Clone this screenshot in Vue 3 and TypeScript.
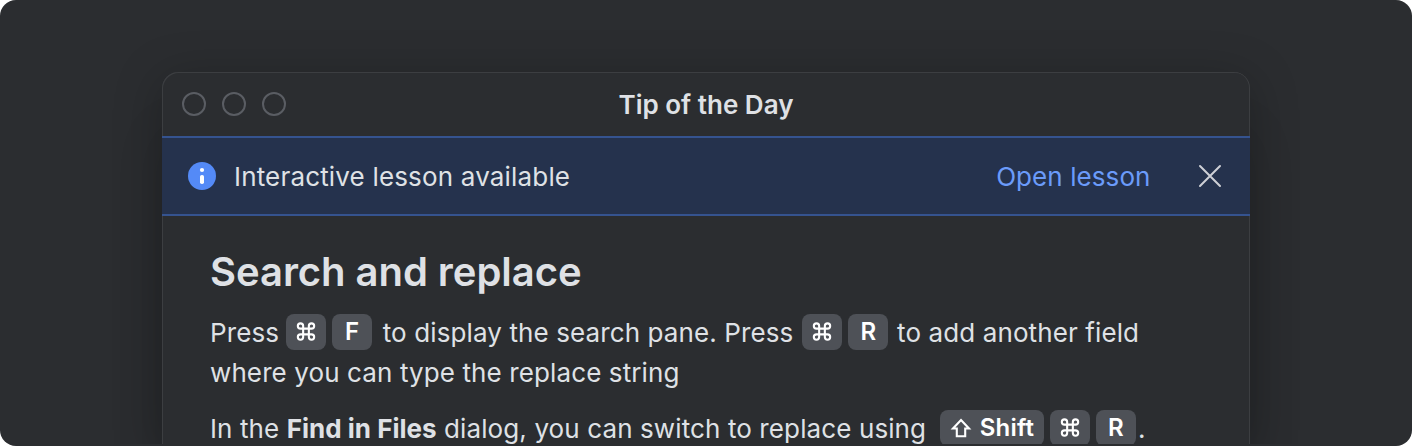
<script setup lang="ts">
type Part = { kind: 'text' | 'bold' | 'keys'; text?: string; keys?: string[]; place?: string }

const paragraphs: Part[][] = [
  [
    { kind: 'text', text: 'Press' },
    { kind: 'keys', keys: ['cmd', 'F'], place: 'first' },
    { kind: 'text', text: 'to display the search pane. Press' },
    { kind: 'keys', keys: ['cmd', 'R'], place: 'second' },
    { kind: 'text', text: 'to add another field where you can type the replace string' },
  ],
  [
    { kind: 'text', text: 'In the ' },
    { kind: 'bold', text: 'Find in Files' },
    { kind: 'text', text: ' dialog, you can switch to replace using' },
    { kind: 'keys', keys: ['Shift', 'cmd', 'R'], place: 'third' },
    { kind: 'text', text: '.' },
  ],
]
</script>

<template>
  <main class="stage">
    <section class="dialog">
      <header class="titlebar">
        <div class="lights"><i v-for="n in 3" :key="n" class="light" /></div>
        <h1 class="title">Tip of the Day</h1>
      </header>
      <div class="banner">
        <svg class="info" viewBox="0 0 28 28">
          <circle cx="14" cy="14" r="14" fill="#548af7" />
          <circle cx="14" cy="8" r="2.1" fill="#fff" />
          <rect x="12" y="13" width="4" height="9" rx="1.8" fill="#fff" />
        </svg>
        <span class="message">Interactive lesson available</span>
        <a class="link">Open lesson</a>
        <svg class="close" viewBox="0 0 24 24">
          <path d="M2 2 22 22M22 2 2 22" fill="none" stroke="#ced0d6" stroke-width="2" stroke-linecap="round" />
        </svg>
      </div>
      <article class="tip">
        <h2 class="heading">Search and replace</h2>
        <p v-for="(parts, i) in paragraphs" :key="i" class="para">
          <template v-for="(part, j) in parts" :key="j">
            <b v-if="part.kind === 'bold'">{{ part.text }}</b>
            <span v-else-if="part.kind === 'keys'" class="keys" :class="part.place">
              <kbd v-for="k in part.keys" :key="k" class="key" :class="{ wide: k === 'Shift' }">
                <svg v-if="k === 'cmd'" class="cmd" viewBox="0 0 20 20">
                  <path d="M7 7V4.2a2.8 2.8 0 1 0-2.8 2.8h11.6a2.8 2.8 0 1 0-2.8-2.8v11.6a2.8 2.8 0 1 0 2.8-2.8H4.2a2.8 2.8 0 1 0 2.8 2.8Z" fill="none" stroke="#fff" stroke-width="2.2" />
                </svg>
                <svg v-else-if="k === 'Shift'" class="shift" viewBox="0 0 22 20">
                  <path d="M11 2 19 10.5H15.2V18.3H6.8V10.5H3Z" fill="none" stroke="#fff" stroke-width="2.1" />
                </svg>
                <span v-if="k !== 'cmd'">{{ k }}</span>
              </kbd>
            </span>
            <template v-else>{{ part.text }}</template>
          </template>
        </p>
      </article>
    </section>
  </main>
</template>

<style>
body { background: #fff; }
</style>

<style scoped>
.stage {
  box-sizing: border-box;
  width: 1412px;
  height: 446px;
  padding: 72px 162px 0;
  overflow: hidden;
  border-radius: 16px;
  background: #2b2d30;
  color: #dfe1e5;
  font: 400 26px/40px Inter, sans-serif;
}
.dialog {
  box-sizing: border-box;
  height: 372px;
  overflow: hidden;
  border-radius: 16px 16px 0 0;
  background: #2b2d30;
  box-shadow: inset 1px 1px #3c3e41, inset -1px 0 #3c3e41, 0 8px 48px rgba(0, 0, 0, 0.25), 0 60px 48px rgba(0, 0, 0, 0.12);
  clip-path: inset(-72px -162px 0);
}
.titlebar {
  display: grid;
  grid-template-columns: 1fr auto 1fr;
  align-items: center;
  height: 64px;
  padding: 0 20px;
}
.lights { display: flex; gap: 16px; }
.light {
  box-sizing: border-box;
  width: 24px;
  height: 24px;
  border: 2px solid #5a5d63;
  border-radius: 50%;
}
.title { margin: 2px 0 0; font-size: 26px; line-height: 40px; font-weight: 600; }
.banner {
  box-sizing: border-box;
  display: flex;
  align-items: center;
  height: 80px;
  padding: 0 28px 0 26px;
  border: solid #35538f;
  border-width: 2px 0;
  background: #25324d;
}
.info { width: 28px; height: 28px; }
.message { margin: 2px auto 0 18px; letter-spacing: 0.17px; }
.link { margin: 2px 47.5px 0 0; color: #6b9bfa; letter-spacing: 0.08px; }
.close { width: 24px; height: 24px; }
.tip { padding: 32px 48px 0; }
.heading { margin: 0 0 17px; font-size: 40px; line-height: 48px; font-weight: 600; letter-spacing: -0.05px; }
.para { margin: 0 0 16px; letter-spacing: 0.11px; }
.para b { letter-spacing: 0; }
.keys { display: inline-flex; gap: 6px; height: 36px; margin-top: 1px; vertical-align: top; }
.first { margin-left: 7px; margin-right: 10.6px; }
.second { margin-left: 9px; margin-right: 8.6px; }
.third { margin-left: 13.8px; margin-right: 2px; }
.key {
  display: flex;
  align-items: center;
  justify-content: center;
  gap: 8px;
  width: 40px;
  height: 36px;
  border-radius: 8px;
  background: #4e5157;
  color: #fff;
  font: 600 24px/36px Inter, sans-serif;
}
.key span { margin-top: -1px; }
.wide { width: 104px; letter-spacing: 0.2px; }
.cmd { width: 20px; height: 19px; margin-bottom: 1px; }
.shift { width: 22px; height: 20px; margin-bottom: 1px; }
</style>
